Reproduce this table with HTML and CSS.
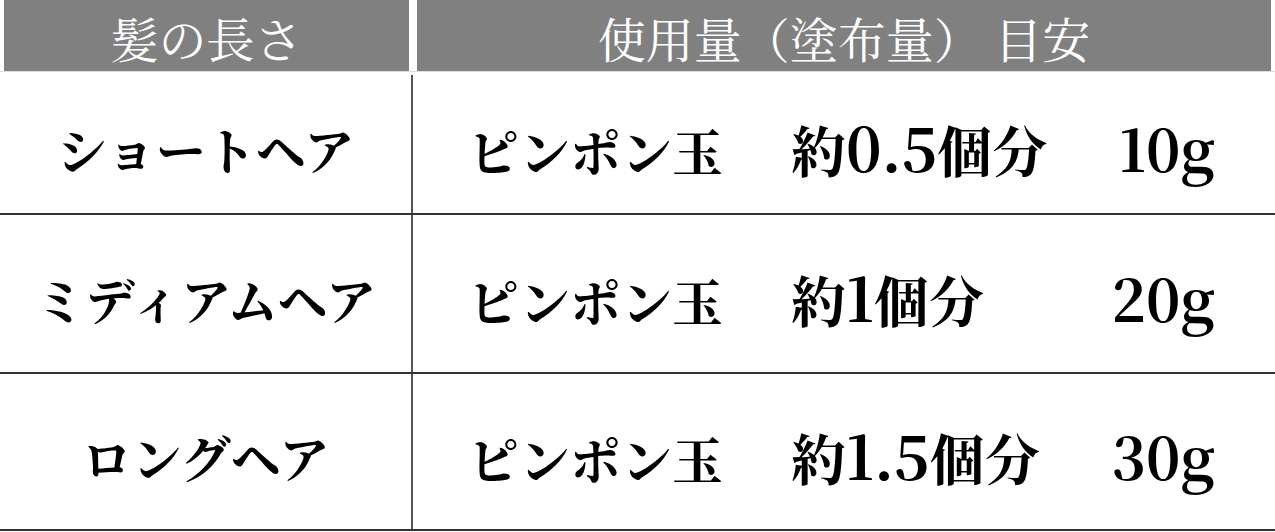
FILE: index.html
```html
<!DOCTYPE html>
<html lang="ja">
<head>
<meta charset="utf-8">
<link rel="stylesheet" href="styles.css">
</head>
<body>
<div class="table">
  <div class="head">
    <div class="hcell hcell-left">髪の長さ</div>
    <div class="hcell hcell-right">使用量（塗布量） 目安</div>
  </div>
  <div class="row row-1">
    <div class="cell-left">ショートヘア</div>
    <div class="cell-right">
      <span class="item">ピンポン玉</span>
      <span class="count">約<span class="num">0.5</span>個分</span>
      <span class="amount">10g</span>
    </div>
  </div>
  <div class="row row-2">
    <div class="cell-left">ミディアムヘア</div>
    <div class="cell-right">
      <span class="item">ピンポン玉</span>
      <span class="count">約<span class="num">1</span>個分</span>
      <span class="amount">20g</span>
    </div>
  </div>
  <div class="row row-3">
    <div class="cell-left">ロングヘア</div>
    <div class="cell-right">
      <span class="item">ピンポン玉</span>
      <span class="count">約<span class="num">1.5</span>個分</span>
      <span class="amount">30g</span>
    </div>
  </div>
</div>
</body>
</html>
```
FILE: styles.css
```css
html, body {
  margin: 0;
  padding: 0;
  background: #ffffff;
}
body {
  font-family: "Noto Serif CJK JP", "Noto Sans CJK JP", serif;
  color: #000;
}
.table {
  width: 1275px;
}
.head {
  display: flex;
  gap: 8px;
  padding: 0 4px;
  height: 71px;
  border-bottom: 1px solid #dcdcdc;
}
.hcell {
  background: #808080;
  color: #ffffff;
  font-size: 48px;
  line-height: 67px;
  padding-top: 4px;
  text-align: center;
  white-space: nowrap;
}
.hcell-left {
  width: 405px;
}
.hcell-right {
  flex: 1;
}
.row {
  display: grid;
  grid-template-columns: 413px 1fr;
  border-bottom: 2px solid #333333;
  box-sizing: border-box;
}
.row-1 {
  margin-top: 3px;
  height: 140px;
}
.row-2 {
  height: 159px;
}
.row-3 {
  height: 157px;
}
.cell-left {
  border-right: 2px solid #555555;
  display: flex;
  align-items: center;
  justify-content: center;
  font-size: 50px;
  font-weight: bold;
  white-space: nowrap;
  padding-top: 8px;
}
.cell-right {
  display: grid;
  grid-template-columns: 323px 1fr auto;
  align-items: baseline;
  align-content: center;
  padding: 8px 60px 0 55px;
  font-size: 51px;
  line-height: 60px;
  font-weight: bold;
  white-space: nowrap;
}
.count {
  font-size: 55px;
}
.num {
  font-size: 60px;
}
.amount {
  font-size: 58px;
}
```
